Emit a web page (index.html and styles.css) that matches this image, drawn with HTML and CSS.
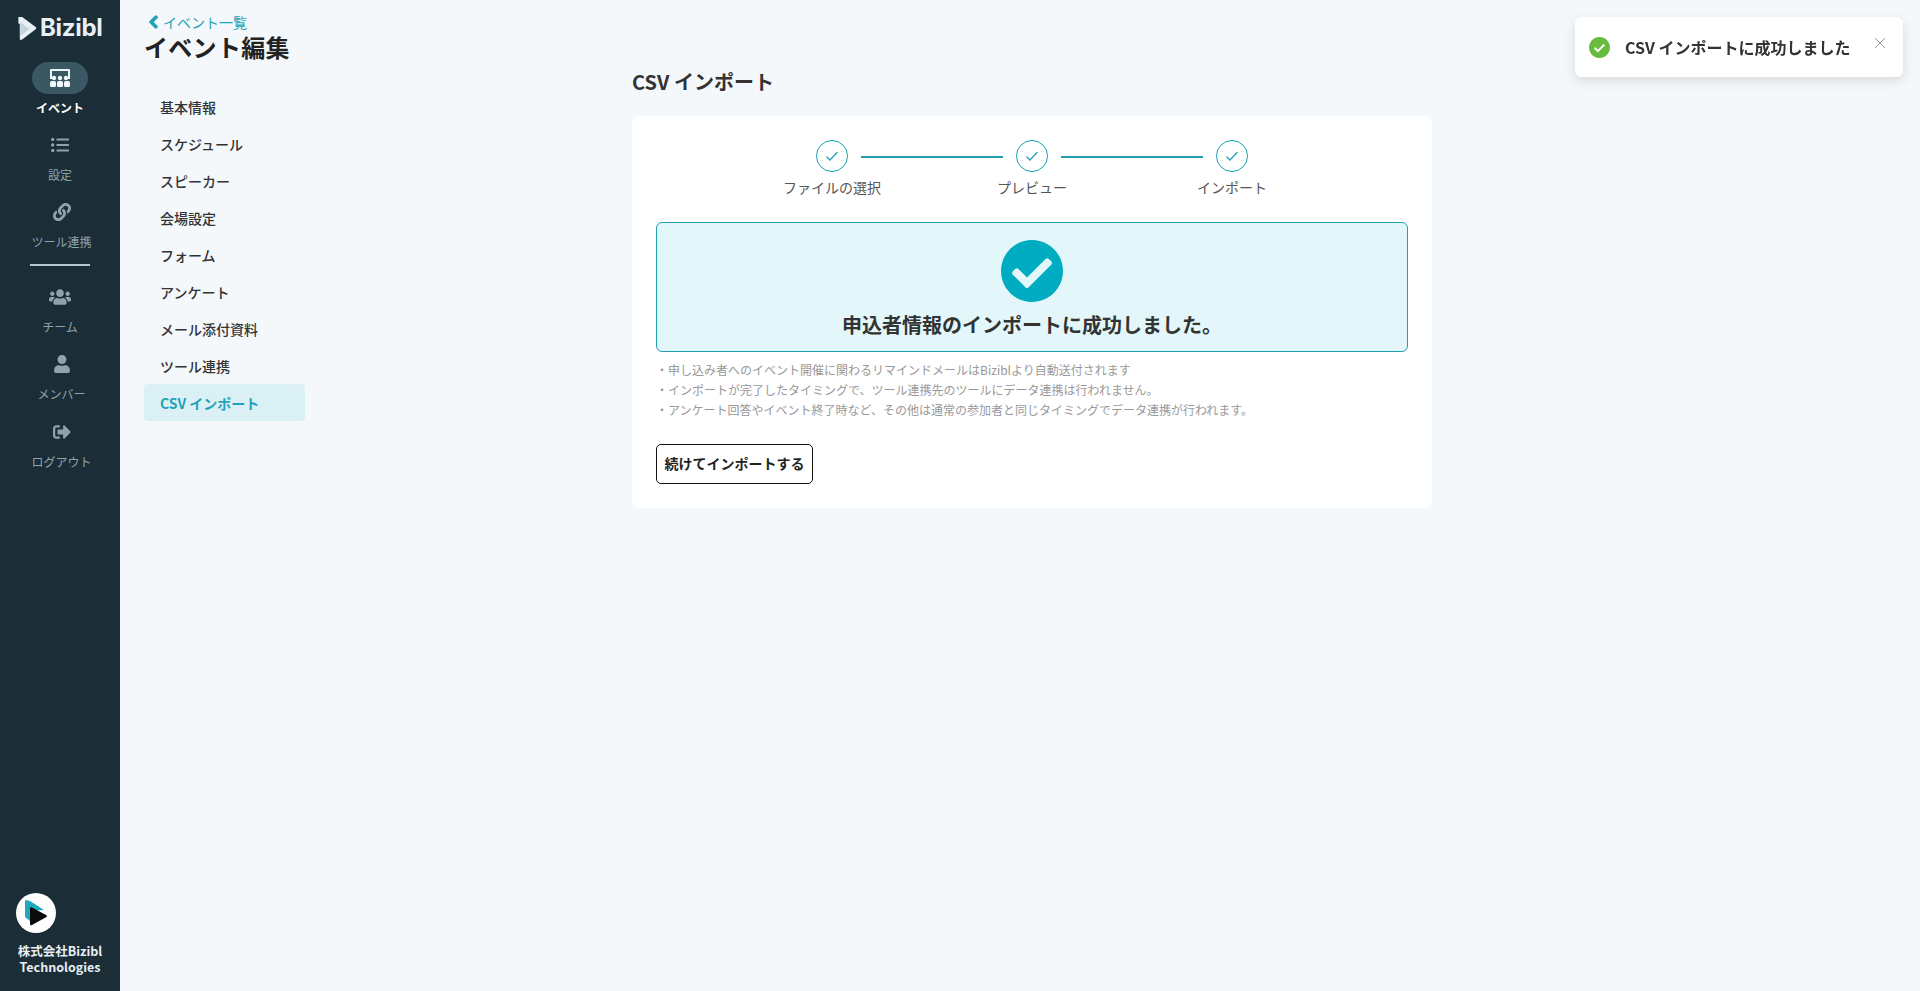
FILE: index.html
```html
<!DOCTYPE html>
<html lang="ja">
<head>
    <meta charset="UTF-8">
    <meta name="viewport" content="width=device-width, initial-scale=1.0">
    <title>イベント編集</title>
    <link rel="stylesheet" href="styles.css">
</head>
<body>
    <aside class="sidebar">
        <div class="brand">
            <svg class="brand-mark" viewBox="0 0 20 25">
                <path d="M1 1l4 0 14 10.500q1.500 1 0 2.200L5 24.500q-1.500.8-2.500 0l0-16-1.500-1z" fill="#e8f0f3"/>
                <path d="M3 6.500v14l9.500-7z" fill="#c3d4da"/>
            </svg>
            <span class="brand-name">Bizibl</span>
        </div>
        <nav class="side-nav">
            <a class="side-item active">
                <span class="side-icon">
                    <svg viewBox="0 0 22 18" width="22" height="18">
                        <path d="M2 0h18a1 1 0 0 1 1 1v9h-2V2H3v8H1V1a1 1 0 0 1 1-1z" fill="currentColor"/>
                        <circle cx="5" cy="9" r="2.200" fill="currentColor"/>
                        <circle cx="11" cy="9" r="2.200" fill="currentColor"/>
                        <circle cx="17" cy="9" r="2.200" fill="currentColor"/>
                        <rect x="1" y="12" width="6" height="6" rx="1.500" fill="currentColor"/>
                        <rect x="8" y="12" width="6" height="6" rx="1.500" fill="currentColor"/>
                        <rect x="15" y="12" width="6" height="6" rx="1.500" fill="currentColor"/>
                    </svg>
                </span>
                <span class="side-label">イベント</span>
            </a>
            <a class="side-item">
                <span class="side-icon">
                    <svg viewBox="0 0 18 16" width="18" height="16">
                        <circle cx="1.700" cy="2.500" r="1.700" fill="currentColor"/>
                        <circle cx="1.700" cy="8" r="1.700" fill="currentColor"/>
                        <circle cx="1.700" cy="13.500" r="1.700" fill="currentColor"/>
                        <rect x="5.500" y="1.500" width="12.500" height="2" rx=".5" fill="currentColor"/>
                        <rect x="5.500" y="7" width="12.500" height="2" rx=".5" fill="currentColor"/>
                        <rect x="5.500" y="12.500" width="12.500" height="2" rx=".5" fill="currentColor"/>
                    </svg>
                </span>
                <span class="side-label">設定</span>
            </a>
            <a class="side-item shifted">
                <span class="side-icon">
                    <svg viewBox="0 0 512 512" width="18" height="18"><path fill="currentColor" d="M326.612 185.391c59.747 59.809 58.927 155.698.36 214.59-.11.12-.24.25-.36.37l-67.2 67.2c-59.27 59.27-155.699 59.262-214.96 0-59.27-59.26-59.27-155.7 0-214.96l37.106-37.106c9.84-9.84 26.786-3.3 27.294 10.606.648 17.722 3.826 35.527 9.69 52.721 1.986 5.822.567 12.262-3.783 16.612l-13.087 13.087c-28.026 28.026-28.905 73.66-1.155 101.96 28.024 28.579 74.086 28.749 102.325.51l67.2-67.19c28.191-28.191 28.073-73.757 0-101.83-3.701-3.694-7.429-6.564-10.341-8.569a16.037 16.037 0 0 1-6.947-12.606c-.396-10.567 3.348-21.456 11.698-29.806l21.054-21.055c5.521-5.521 14.182-6.199 20.584-1.731a152.482 152.482 0 0 1 20.522 17.197zM467.547 44.449c-59.261-59.262-155.69-59.27-214.96 0l-67.2 67.2c-.12.12-.25.25-.36.37-58.566 58.892-59.387 154.781.36 214.59a152.454 152.454 0 0 0 20.521 17.196c6.402 4.468 15.064 3.789 20.584-1.731l21.054-21.055c8.35-8.35 12.094-19.239 11.698-29.806a16.037 16.037 0 0 0-6.947-12.606c-2.912-2.005-6.64-4.875-10.341-8.569-28.073-28.073-28.191-73.639 0-101.83l67.2-67.19c28.239-28.239 74.3-28.069 102.325.51 27.75 28.3 26.872 73.934-1.155 101.96l-13.087 13.087c-4.35 4.35-5.769 10.79-3.783 16.612 5.864 17.194 9.042 34.999 9.69 52.721.509 13.906 17.454 20.446 27.294 10.606l37.106-37.106c59.271-59.259 59.271-155.699.001-214.959z"/></svg>
                </span>
                <span class="side-label">ツール連携</span>
            </a>
            <div class="side-divider"></div>
            <a class="side-item">
                <span class="side-icon">
                    <svg viewBox="0 0 640 512" width="22" height="18"><path fill="currentColor" d="M96 224c35.3 0 64-28.7 64-64s-28.7-64-64-64-64 28.7-64 64 28.7 64 64 64zm448 0c35.3 0 64-28.7 64-64s-28.7-64-64-64-64 28.7-64 64 28.7 64 64 64zm32 32h-64c-17.6 0-33.5 7.1-45.1 18.6 40.3 22.1 68.9 62 75.1 109.4h66c17.7 0 32-14.3 32-32v-32c0-35.3-28.7-64-64-64zm-256 0c61.9 0 112-50.1 112-112S381.9 32 320 32 208 82.1 208 144s50.1 112 112 112zm76.8 32h-8.3c-20.8 10-43.9 16-68.5 16s-47.6-6-68.5-16h-8.3C179.6 288 128 339.6 128 403.2V432c0 26.5 21.5 48 48 48h288c26.5 0 48-21.5 48-48v-28.8c0-63.6-51.6-115.2-115.2-115.2zm-223.7-13.4C161.5 263.1 145.6 256 128 256H64c-35.3 0-64 28.7-64 64v32c0 17.7 14.3 32 32 32h65.9c6.3-47.4 34.9-87.3 75.2-109.4z"/></svg>
                </span>
                <span class="side-label">チーム</span>
            </a>
            <a class="side-item shifted">
                <span class="side-icon">
                    <svg viewBox="0 0 448 512" width="16" height="18"><path fill="currentColor" d="M224 256c70.7 0 128-57.3 128-128S294.7 0 224 0 96 57.3 96 128s57.3 128 128 128zm89.6 32h-16.7c-22.2 10.2-46.9 16-72.9 16s-50.6-5.8-72.9-16h-16.7C60.2 288 0 348.2 0 422.4V464c0 26.5 21.500 48 48 48h352c26.500 0 48-21.500 48-48v-41.600c0-74.200-60.200-134.400-134.400-134.400z"/></svg>
                </span>
                <span class="side-label">メンバー</span>
            </a>
            <a class="side-item shifted">
                <span class="side-icon">
                    <svg viewBox="0 0 512 512" width="18" height="18"><path fill="currentColor" d="M497 273L329 441c-15 15-41 4.5-41-17v-96H152c-13.3 0-24-10.7-24-24v-96c0-13.3 10.7-24 24-24h136V88c0-21.4 25.9-32 41-17l168 168c9.3 9.400 9.300 24.600 0 34zM192 436v-40c0-6.600-5.400-12-12-12H96c-17.700 0-32-14.300-32-32V160c0-17.700 14.300-32 32-32h84c6.600 0 12-5.400 12-12V76c0-6.600-5.400-12-12-12H96c-53 0-96 43-96 96v192c0 53 43 96 96 96h84c6.600 0 12-5.400 12-12z"/></svg>
                </span>
                <span class="side-label">ログアウト</span>
            </a>
        </nav>
        <div class="company">
            <div class="company-logo">
                <svg viewBox="0 0 40 40" width="40" height="40">
                    <path d="M9 7l5 1v20l-5-4z" fill="#1fa9bd"/>
                    <path d="M14 8l14 9-14 1z" fill="#1fa9bd"/>
                    <path d="M14 15.500q0-2 2-1l14 7.500q2 1 0 2.200L16 32q-2 1-2-1z" fill="#0b0b0b"/>
                </svg>
            </div>
            <p class="company-name">株式会社Bizibl<br>Technologies</p>
        </div>
    </aside>

    <main class="main">
        <header class="page-head">
            <a class="back-link">
                <svg viewBox="0 0 320 512" width="11" height="14"><path fill="currentColor" stroke="currentColor" stroke-width="50" d="M34.52 239.03L228.87 44.69c9.37-9.37 24.57-9.37 33.94 0l22.67 22.67c9.36 9.36 9.37 24.52.04 33.9L131.49 256l154.02 154.75c9.34 9.38 9.32 24.54-.04 33.9l-22.67 22.67c-9.37 9.37-24.57 9.37-33.94 0L34.52 272.97c-9.37-9.37-9.37-24.57 0-33.94z"/></svg>
                イベント一覧
            </a>
            <h1 class="page-title">イベント編集</h1>
        </header>

        <div class="page-body">
            <ul class="sub-nav">
                <li>基本情報</li>
                <li>スケジュール</li>
                <li>スピーカー</li>
                <li>会場設定</li>
                <li>フォーム</li>
                <li>アンケート</li>
                <li>メール添付資料</li>
                <li>ツール連携</li>
                <li class="current">CSV インポート</li>
            </ul>

            <section class="content">
                <h2 class="content-title">CSV インポート</h2>
                <div class="card">
                    <div class="steps">
                        <div class="step">
                            <span class="step-circle"><svg viewBox="0 0 14 14" width="14" height="14"><path d="M1.500 7.500l3.500 3.500 7.500-8" fill="none" stroke="currentColor" stroke-width="1.300"/></svg></span>
                            <span class="step-label">ファイルの選択</span>
                        </div>
                        <div class="step-line"></div>
                        <div class="step">
                            <span class="step-circle"><svg viewBox="0 0 14 14" width="14" height="14"><path d="M1.500 7.500l3.500 3.500 7.500-8" fill="none" stroke="currentColor" stroke-width="1.300"/></svg></span>
                            <span class="step-label">プレビュー</span>
                        </div>
                        <div class="step-line"></div>
                        <div class="step">
                            <span class="step-circle"><svg viewBox="0 0 14 14" width="14" height="14"><path d="M1.500 7.500l3.500 3.500 7.500-8" fill="none" stroke="currentColor" stroke-width="1.300"/></svg></span>
                            <span class="step-label">インポート</span>
                        </div>
                    </div>

                    <div class="result">
                        <svg class="result-icon" viewBox="8 8 496 496"><path fill="currentColor" d="M504 256c0 136.967-111.033 248-248 248S8 392.967 8 256 119.033 8 256 8s248 111.033 248 248zM227.314 387.314l184-184c6.248-6.248 6.248-16.379 0-22.627l-22.627-22.627c-6.248-6.249-16.379-6.249-22.628 0L216 308.118l-70.059-70.059c-6.248-6.248-16.379-6.248-22.628 0l-22.627 22.627c-6.248 6.248-6.248 16.379 0 22.627l104 104c6.249 6.249 16.379 6.249 22.628.001z"/></svg>
                        <p class="result-text">申込者情報のインポートに成功しました。</p>
                    </div>

                    <ul class="notes">
                        <li>・申し込み者へのイベント開催に関わるリマインドメールはBiziblより自動送付されます</li>
                        <li>・インポートが完了したタイミングで、ツール連携先のツールにデータ連携は行われません。</li>
                        <li>・アンケート回答やイベント終了時など、その他は通常の参加者と同じタイミングでデータ連携が行われます。</li>
                    </ul>

                    <button class="btn-outline">続けてインポートする</button>
                </div>
            </section>
        </div>
    </main>

    <div class="toast">
        <svg class="toast-icon" viewBox="8 8 496 496"><path fill="currentColor" d="M504 256c0 136.967-111.033 248-248 248S8 392.967 8 256 119.033 8 256 8s248 111.033 248 248z"/><path d="M140 262l80 78 150-154" fill="none" stroke="#fff" stroke-width="46"/></svg>
        <span class="toast-text">CSV インポートに成功しました</span>
        <svg class="toast-close" viewBox="0 0 12 12" width="12" height="12"><path d="M1 1l10 10M11 1L1 11" stroke="currentColor" stroke-width="1"/></svg>
    </div>
</body>
</html>
```

FILE: styles.css
```css
* {
    box-sizing: border-box;
}

body {
    font-family: "Noto Sans CJK JP", "Noto Sans", sans-serif;
    display: flex;
    height: 100vh;
    margin: 0;
    overflow: hidden;
    background-color: #f4f8fb;
    color: #333;
}

p, ul, h1, h2 {
    margin: 0;
    padding: 0;
}

ul {
    list-style: none;
}

/* Sidebar */
.sidebar {
    width: 120px;
    flex-shrink: 0;
    display: flex;
    flex-direction: column;
    background-color: #1b2d37;
    color: #8fa3ad;
}

.brand {
    display: flex;
    align-items: center;
    gap: 3px;
    height: 26px;
    margin: 15px 0 21px 17px;
}

.brand-mark {
    width: 20px;
    height: 24px;
}

.brand-name {
    font-family: Inter, sans-serif;
    font-size: 24px;
    font-weight: 700;
    letter-spacing: -.3px;
    line-height: 26px;
    color: #e8f0f3;
}

.side-nav {
    display: flex;
    flex-direction: column;
    align-items: center;
}

.side-item {
    display: flex;
    flex-direction: column;
    align-items: center;
    width: 100%;
    height: 67px;
}

.side-item:last-child {
    margin-top: 1px;
}

.side-item.shifted {
    padding-left: 3px;
}

.side-icon {
    display: flex;
    align-items: center;
    justify-content: center;
    width: 56px;
    height: 32px;
    border-radius: 16px;
}

.side-item.active .side-icon {
    background-color: #3a5864;
    color: #f0f5f7;
}

.side-label {
    font-size: 12px;
    line-height: 18px;
    margin-top: 5px;
}

.side-item.active .side-label {
    color: #fff;
    font-weight: 700;
}

.side-divider {
    width: 60px;
    height: 2px;
    margin: 1px 0 15px;
    background-color: #b8c6cc;
}

.company {
    margin-top: auto;
    padding: 0 0 16px 16px;
}

.company-logo {
    width: 40px;
    height: 40px;
    border-radius: 50%;
    background-color: #fff;
}

.company-name {
    margin: 10px 0 0 -16px;
    font-size: 12.5px;
    font-weight: 700;
    line-height: 16px;
    text-align: center;
    color: #e8eef1;
}

/* Main area */
.main {
    flex: 1;
    padding: 0 0 0 23px;
}

.page-head {
    height: 89px;
    padding-top: 12px;
}

.back-link {
    display: flex;
    align-items: center;
    gap: 4px;
    padding-left: 5px;
    height: 20px;
    font-size: 14px;
    line-height: 20px;
    color: #1fa3b8;
}

.page-title {
    margin-top: -1px;
    padding-left: 1px;
    font-size: 24px;
    font-weight: 700;
    letter-spacing: .3px;
    line-height: 32px;
    color: #222;
}

.page-body {
    display: flex;
}

.sub-nav {
    width: 162px;
    flex-shrink: 0;
    font-size: 14px;
    font-weight: 500;
}

.sub-nav li {
    height: 37px;
    padding-left: 17px;
    line-height: 37px;
    border-radius: 4px;
}

.sub-nav li.current {
    height: 37px;
    margin: -1px 0 0 1px;
    padding-left: 16px;
    line-height: 38px;
    background-color: #daf0f5;
    color: #1fa3b8;
    font-weight: 700;
}

.content {
    width: 800px;
    margin-left: 327px;
    margin-top: -19px;
}

.content-title {
    height: 46px;
    font-size: 20px;
    font-weight: 700;
    line-height: 24px;
}

.card {
    padding: 24px;
    background-color: #fff;
    border-radius: 6px;
}

/* Stepper */
.steps {
    display: flex;
    justify-content: center;
    align-items: flex-start;
}

.step {
    display: flex;
    flex-direction: column;
    align-items: center;
    width: 32px;
}

.step-circle {
    display: flex;
    align-items: center;
    justify-content: center;
    width: 32px;
    height: 32px;
    border: 1px solid #1f9fb2;
    border-radius: 50%;
    color: #1f9fb2;
}

.step-label {
    margin-top: 5px;
    font-size: 14px;
    line-height: 21px;
    white-space: nowrap;
    color: #555;
}

.step-line {
    width: 142px;
    height: 2px;
    margin: 16px 13px 0;
    background-color: #1f9fb2;
}

/* Result box */
.result {
    display: flex;
    flex-direction: column;
    align-items: center;
    height: 130px;
    margin-top: 24px;
    padding-top: 17px;
    background-color: #e3f7fa;
    border: 1px solid #1f9fb2;
    border-radius: 6px;
}

.result-icon {
    width: 62px;
    height: 62px;
    color: #00acc1;
}

.result-text {
    margin-top: 8px;
    font-size: 20px;
    font-weight: 700;
    line-height: 30px;
}

.notes {
    margin-top: 8px;
    font-size: 12px;
    line-height: 20px;
    color: #999;
}

.btn-outline {
    display: block;
    width: 157px;
    height: 40px;
    margin-top: 24px;
    padding: 0 0 2px;
    font-family: inherit;
    font-size: 14px;
    font-weight: 700;
    color: #222;
    background-color: #fff;
    border: 1px solid #111;
    border-radius: 5px;
    cursor: pointer;
}

/* Toast */
.toast {
    position: fixed;
    top: 17px;
    right: 17px;
    display: flex;
    align-items: center;
    width: 328px;
    height: 60px;
    padding-left: 14px;
    background-color: #fff;
    border-radius: 6px;
    box-shadow: 0 4px 12px rgba(0,0,0,0.12);
}

.toast-icon {
    width: 21px;
    height: 21px;
    color: #67bb3f;
}

.toast-text {
    margin-left: 15px;
    font-size: 16px;
    font-weight: 700;
    white-space: nowrap;
}

.toast-close {
    position: absolute;
    top: 20px;
    right: 17px;
    color: #999;
}
```
